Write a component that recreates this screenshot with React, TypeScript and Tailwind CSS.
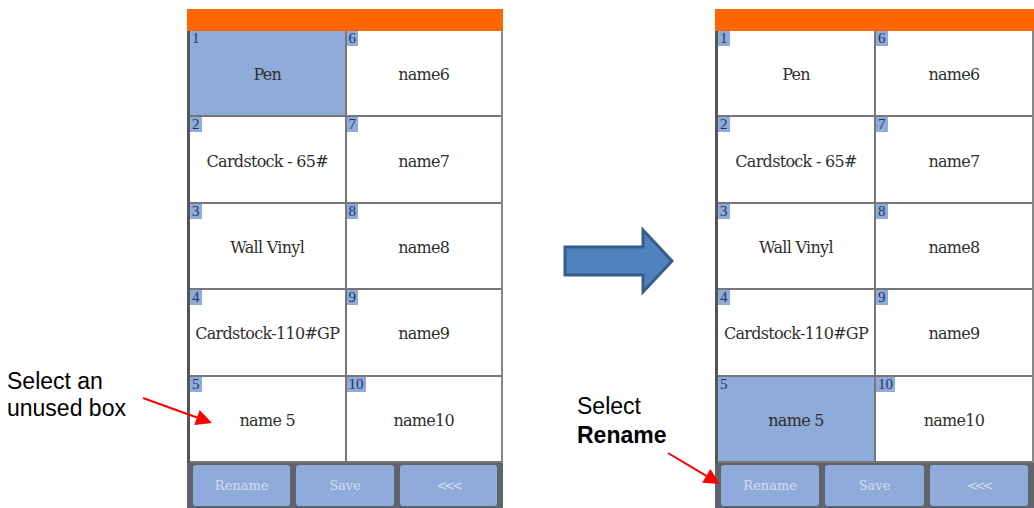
import React from "react";

type Cell = { n: number; name: string };

const leftCol: Cell[] = [
  { n: 1, name: "Pen" },
  { n: 2, name: "Cardstock - 65#" },
  { n: 3, name: "Wall Vinyl" },
  { n: 4, name: "Cardstock-110#GP" },
  { n: 5, name: "name 5" },
];
const rightCol: Cell[] = [
  { n: 6, name: "name6" },
  { n: 7, name: "name7" },
  { n: 8, name: "name8" },
  { n: 9, name: "name9" },
  { n: 10, name: "name10" },
];

const serif = { fontFamily: '"DejaVu Serif", "Liberation Serif", serif' };
const sans = { fontFamily: '"Liberation Sans", Arial, sans-serif' };

const Box = ({ cell, selected }: { cell: Cell; selected: boolean }) => (
  <div
    className={`relative flex items-center justify-center h-[86.4px] border-b-2 border-[#777] ${
      selected ? "bg-[#8eabd9]" : "bg-white"
    }`}
  >
    <span className="absolute left-0 top-0 bg-[#8eabd9] text-[#1f3560] text-[15px] leading-[15px] px-[2px] font-['Liberation_Serif',serif]">
      {cell.n}
    </span>
    <span className="text-[16px] text-[#2f2f2f] tracking-[-0.7px] mt-[4px]" style={serif}>
      {cell.name}
    </span>
  </div>
);

const Panel = ({ selected, width }: { selected: number; width: string }) => (
  <div className={`flex flex-col ${width} h-[499px] mt-[9px] bg-[#5f646b]`}>
    <div className="h-[22px] bg-[#ff6600]" />
    <div className="flex border-l-[3px] border-[#555] border-r-2 border-r-[#888]">
      <div className="flex-1 flex flex-col border-r-2 border-[#777]">
        {leftCol.map((c) => (
          <Box key={c.n} cell={c} selected={c.n === selected} />
        ))}
      </div>
      <div className="flex-1 flex flex-col">
        {rightCol.map((c) => (
          <Box key={c.n} cell={c} selected={c.n === selected} />
        ))}
      </div>
    </div>
    <div className="flex-1 flex gap-[6px] px-[6px] py-[2px]">
      {["Rename", "Save", "<<<"].map((b) => (
        <div
          key={b}
          className={`flex-1 flex items-center justify-center rounded-[3px] bg-[#8eabd9] text-[#d2ddf0] text-[13px] ${
            b === "<<<" ? "tracking-[-3px]" : ""
          }`}
          style={serif}
        >
          {b}
        </div>
      ))}
    </div>
  </div>
);

const RedArrow = ({ x1, y1, x2, y2 }: { x1: number; y1: number; x2: number; y2: number }) => {
  const ang = Math.atan2(y2 - y1, x2 - x1);
  const len = 16;
  const w = 8;
  const bx = x2 - len * Math.cos(ang);
  const by = y2 - len * Math.sin(ang);
  const px = -Math.sin(ang) * w;
  const py = Math.cos(ang) * w;
  return (
    <g>
      <line x1={x1} y1={y1} x2={bx} y2={by} stroke="#ff0000" strokeWidth={2} />
      <polygon points={`${x2},${y2} ${bx + px},${by + py} ${bx - px},${by - py}`} fill="#ff0000" />
    </g>
  );
};

export default function App() {
  return (
    <div className="relative w-[1034px] h-[508px] bg-white overflow-hidden">
      <div className="flex">
        <div className="w-[187px]" />
        <Panel selected={1} width="w-[316px]" />
        <div className="w-[212px]" />
        <Panel selected={5} width="w-[319px]" />
      </div>

      <div className="absolute left-[7px] top-[368px] text-[23px] leading-[27px] text-black" style={sans}>
        Select an
        <br />
        unused box
      </div>
      <div className="absolute left-[577px] top-[392px] text-[23px] leading-[29px] text-black" style={sans}>
        Select
        <br />
        <span className="font-bold">Rename</span>
      </div>

      <svg className="absolute left-0 top-0 pointer-events-none" width={1034} height={508}>
        <RedArrow x1={143} y1={398} x2={212} y2={423} />
        <RedArrow x1={668} y1={453} x2={720} y2={484} />
        <polygon
          points="565,247 643,247 643,230 672,261 643,292 643,275 565,275"
          fill="#4f81bd"
          stroke="#385d8a"
          strokeWidth={3}
        />
      </svg>
    </div>
  );
}
